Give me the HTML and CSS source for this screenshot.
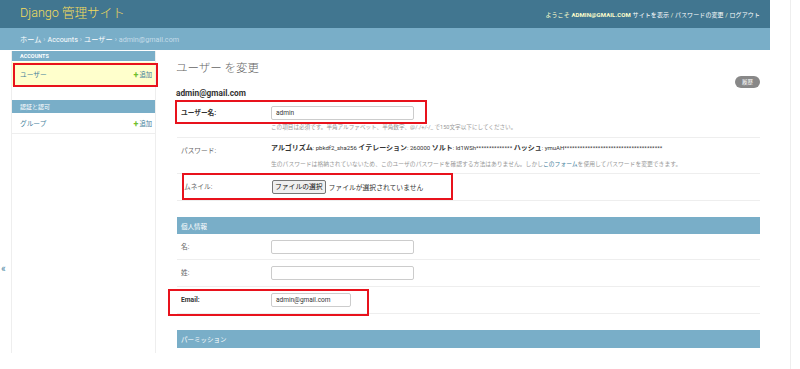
FILE: index.html
```html
<!DOCTYPE html>
<html lang="ja">
<head>
<meta charset="utf-8">
<title>ユーザー を変更 | Django 管理サイト</title>
<link rel="stylesheet" href="styles.css">
</head>
<body>
<div class="page">
  <div class="site">
    <header class="header">
      <div class="branding">Django 管理サイト</div>
      <div class="user-tools">ようこそ <strong>ADMIN@GMAIL.COM</strong> <a>サイトを表示</a> / <a>パスワードの変更</a> / <a>ログアウト</a></div>
    </header>
    <nav class="breadcrumbs"><a>ホーム</a><span class="sep">›</span><a>Accounts</a><span class="sep">›</span><a>ユーザー</a><span class="sep">›</span><span class="last">admin@gmail.com</span></nav>
    <div class="main">
      <div class="toggle">«</div>
      <nav class="sidebar">
        <div class="module">
          <div class="caption caption-first">Accounts</div>
          <div class="nav-row current"><a>ユーザー</a><a class="add"><span class="plus">+</span>追加</a></div>
        </div>
        <div class="module">
          <div class="caption caption-jp">認証と認可</div>
          <div class="nav-row"><a>グループ</a><a class="add"><span class="plus">+</span>追加</a></div>
        </div>
      </nav>
      <div class="content">
        <h1 class="title">ユーザー を変更</h1>
        <div class="title-row">
          <h2 class="subtitle">admin@gmail.com</h2>
          <a class="pill">履歴</a>
        </div>
        <fieldset class="fieldset">
          <div class="form-row">
            <label class="label required">ユーザー名:</label>
            <div class="field">
              <div class="input wide">admin</div>
              <div class="help">この項目は必須です。半角アルファベット、半角数字、@/./+/-/_ で150文字以下にしてください。</div>
            </div>
          </div>
          <div class="form-row">
            <label class="label label-ro">パスワード:</label>
            <div class="field">
              <div class="readonly"><strong>アルゴリズム</strong>: pbkdf2_sha256 <strong>イテレーション</strong>: 260000 <strong>ソルト</strong>: ld1WSh************** <strong>ハッシュ</strong>: ymuAH**************************************</div>
              <div class="help help-pw">生のパスワードは格納されていないため、このユーザのパスワードを確認する方法はありません。しかし<a>このフォーム</a>を使用してパスワードを変更できます。</div>
            </div>
          </div>
          <div class="form-row">
            <label class="label label-thumb">ムネイル:</label>
            <div class="field file-field">
              <span class="file-btn">ファイルの選択</span><span class="file-none">ファイルが選択されていません</span>
            </div>
          </div>
        </fieldset>
        <fieldset class="fieldset">
          <div class="fs-caption">個人情報</div>
          <div class="form-row">
            <label class="label">名:</label>
            <div class="field"><div class="input wide"></div></div>
          </div>
          <div class="form-row">
            <label class="label">姓:</label>
            <div class="field"><div class="input wide"></div></div>
          </div>
          <div class="form-row">
            <label class="label required">Email:</label>
            <div class="field"><div class="input narrow">admin@gmail.com</div></div>
          </div>
        </fieldset>
        <fieldset class="fieldset">
          <div class="fs-caption fs-caption-tall">パーミッション</div>
        </fieldset>
      </div>
    </div>
  </div>
  <div class="gutter"></div>

  <div class="mark mark-sidebar"></div>
  <div class="mark mark-username"></div>
  <div class="mark mark-thumb"></div>
  <div class="mark mark-email"></div>
</div>
</body>
</html>
```
FILE: styles.css
```css
* { box-sizing: border-box; }
html, body { margin: 0; padding: 0; background: #fff; }
body {
  font-family: Roboto, "Noto Sans CJK JP", "DejaVu Sans", sans-serif;
  color: #333;
  overflow: hidden;
}
a { text-decoration: none; }

.page {
  position: relative;
  display: flex;
  width: 800px;
  height: 369px;
}
.site { width: 770px; flex: none; }
.gutter {
  width: 21px;
  height: 369px;
  border-right: 1px solid #eee;
  flex: none;
}

/* header */
.header {
  height: 28px;
  background: #417690;
  display: flex;
  align-items: center;
  justify-content: space-between;
  padding: 0 10px 0 20px;
}
.branding {
  color: #f5dd5d;
  font-size: 12.6px;
  font-weight: 300;
  line-height: 16px;
  margin-top: -2px;
}
.user-tools {
  color: #ffc;
  font-size: 6px;
  letter-spacing: 0.1px;
  margin-top: 1px;
}
.user-tools strong { font-weight: 700; }
.user-tools a { color: #fff; }

.breadcrumbs {
  height: 22px;
  background: #79aec8;
  display: flex;
  align-items: center;
  padding-left: 20px;
  font-size: 7.2px;
  color: #c4dce8;
}
.breadcrumbs a { color: #fff; }
.breadcrumbs .sep { margin: 0 2px; color: #c4dce8; }
.breadcrumbs .last { color: #c4dce8; }

/* main */
.main {
  display: flex;
  height: 302px;
  margin-top: 1px;
  overflow: hidden;
}
.toggle {
  width: 12px;
  flex: none;
  border-right: 1px solid #eee;
  color: #447e9b;
  font-size: 10px;
  line-height: 10px;
  padding-top: 213px;
  padding-left: 1px;
}
.sidebar {
  width: 144px;
  flex: none;
  border-right: 1px solid #eee;
}
.module + .module { margin-top: 14px; }
.caption {
  background: #79aec8;
  color: #fff;
  font-size: 5.5px;
  font-weight: 700;
  text-transform: uppercase;
  padding-left: 8px;
  display: flex;
  align-items: center;
}
.caption-first { height: 10px; }
.caption-jp { height: 13px; font-weight: 400; font-size: 6px; }
.nav-row {
  display: flex;
  justify-content: space-between;
  align-items: center;
  padding: 0 3px 0 8px;
  height: 21px;
  border-bottom: 1px solid #eee;
  font-size: 6.7px;
}
.nav-row.current {
  height: 24px;
  margin-top: 1px;
  background: #ffc;
  border-bottom: none;
}
.nav-row a { color: #447e9b; }
.nav-row .add { font-size: 6.3px; }
.plus {
  color: #70bf2b;
  font-weight: 700;
  font-size: 9px;
  margin-right: 1px;
  position: relative;
  top: 0.5px;
}

/* content */
.content {
  flex: 1;
  padding: 10px 10px 0 20px;
}
.title {
  margin: 0;
  font-size: 11.5px;
  font-weight: 300;
  line-height: 14px;
  color: #666;
}
.title-row {
  display: flex;
  justify-content: space-between;
  align-items: flex-start;
  margin-top: 1px;
}
.subtitle {
  margin: 12px 0 0;
  font-size: 8.3px;
  line-height: 10px;
  font-weight: 700;
  color: #333;
}
.pill {
  width: 25px;
  height: 12px;
  border-radius: 6px;
  background: #888;
  color: #fff;
  font-size: 5.5px;
  display: flex;
  align-items: center;
  justify-content: center;
}

.fieldset {
  margin: 2px 0 16px 1px;
  padding: 0;
  border: none;
  min-width: 0;
}
.fieldset + .fieldset { margin-top: 0; }
.fs-caption {
  height: 17px;
  background: #79aec8;
  color: #fff;
  font-size: 6.5px;
  display: flex;
  align-items: center;
  padding-left: 4px;
}
.fs-caption-tall { height: 18px; }

.form-row {
  display: flex;
  padding: 6px 4px;
  border-bottom: 1px solid #eee;
}
.label {
  width: 90px;
  flex: none;
  font-size: 6.7px;
  line-height: 14px;
  color: #666;
}
.label.required { color: #333; font-weight: 700; }
.label-ro { line-height: 12px; padding-top: 1px; }
.label-thumb { padding-left: 3px; }
.field { flex: 1; min-width: 0; }

.input {
  height: 14px;
  border: 1px solid #ccc;
  border-radius: 2px;
  background: #fff;
  font-size: 6.5px;
  line-height: 12px;
  padding-left: 4px;
  color: #333;
}
.input.wide { width: 143px; }
.input.narrow { width: 80px; }

.help {
  margin-top: 3px;
  font-size: 5.6px;
  line-height: 8px;
  color: #999;
  white-space: nowrap;
}
.help-pw { margin-top: 8px; font-size: 5.8px; }
.help a { color: #447e9b; }

.readonly {
  font-size: 6px;
  line-height: 8px;
  color: #333;
  white-space: nowrap;
}
.readonly strong { font-size: 7px; font-weight: 700; }
.form-row:nth-child(2) { padding-bottom: 5px; }

.file-field {
  display: flex;
  align-items: center;
  height: 14px;
}
.file-btn {
  height: 14px;
  border: 1px solid #767676;
  border-radius: 2px;
  background: #efefef;
  font-size: 6.8px;
  line-height: 12px;
  padding: 0 2px;
  color: #111;
  margin-left: 1px;
}
.file-none {
  font-size: 6.8px;
  margin-left: 3px;
  color: #333;
}

/* annotation marks */
.mark {
  position: absolute;
  border: 2px solid #e8121c;
  pointer-events: none;
}
.mark-sidebar { left: 13px; top: 63px; width: 145px; height: 24px; }
.mark-username { left: 175px; top: 100px; width: 252px; height: 24px; }
.mark-thumb { left: 182px; top: 173px; width: 271px; height: 27px; }
.mark-email { left: 168px; top: 289px; width: 201px; height: 27px; }
```
